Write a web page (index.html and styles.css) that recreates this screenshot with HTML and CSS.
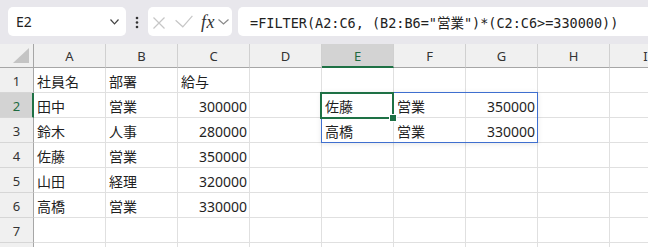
FILE: index.html
```html
<!DOCTYPE html>
<html lang="ja">
<head>
<meta charset="utf-8">
<title>FILTER</title>
<link rel="stylesheet" href="styles.css">
</head>
<body>
<div class="topbar">
  <div class="namebox">
    <span class="nb-text">E2</span>
    <svg class="nb-chev" width="9" height="6" viewBox="0 0 9 6"><polyline points="0.5,0.5 4.5,4.8 8.5,0.5" fill="none" stroke="#444" stroke-width="1.2"/></svg>
  </div>
  <div class="dots">
    <svg width="4" height="14" viewBox="0 0 4 14"><circle cx="2" cy="2" r="1.3" fill="#333"/><circle cx="2" cy="6.5" r="1.3" fill="#333"/><circle cx="2" cy="11" r="1.3" fill="#333"/></svg>
  </div>
  <div class="fbtns">
    <svg class="ic-x" width="12" height="12" viewBox="0 0 12 12"><path d="M0.5 0.5 L11.5 11.5 M11.5 0.5 L0.5 11.5" stroke="#c6c6c6" stroke-width="1.2" fill="none"/></svg>
    <svg class="ic-ok" width="18" height="13" viewBox="0 0 18 13"><polyline points="0.6,5.2 7.8,11.8 17.4,0.8" stroke="#c6c6c6" stroke-width="1.2" fill="none"/></svg>
    <span class="fx">fx</span>
    <svg class="ic-chev" width="11" height="6" viewBox="0 0 11 6"><polyline points="0.5,0.5 5.5,5 10.5,0.5" fill="none" stroke="#8a8a8a" stroke-width="1.2"/></svg>
  </div>
  <div class="formula">=FILTER(A2:C6, (B2:B6="営業")*(C2:C6&gt;=330000))</div>
</div>

<div class="sheet">
  <div class="grid">
    <div class="ch corner"><svg width="17" height="16" viewBox="0 0 17 16"><polygon points="16,0 16,15 0,15" fill="#c4c4c4"/></svg></div>
    <div class="ch">A</div><div class="ch">B</div><div class="ch">C</div><div class="ch">D</div><div class="ch on">E</div><div class="ch">F</div><div class="ch">G</div><div class="ch">H</div><div class="ch">I</div>

    <div class="rh">1</div><div class="c">社員名</div><div class="c">部署</div><div class="c">給与</div><div class="c"></div><div class="c"></div><div class="c"></div><div class="c"></div><div class="c"></div><div class="c"></div>

    <div class="rh on">2</div><div class="c">田中</div><div class="c">営業</div><div class="c num">300000</div><div class="c"></div><div class="c">佐藤</div><div class="c">営業</div><div class="c num">350000</div><div class="c"></div><div class="c"></div>

    <div class="rh">3</div><div class="c">鈴木</div><div class="c">人事</div><div class="c num">280000</div><div class="c"></div><div class="c">高橋</div><div class="c">営業</div><div class="c num">330000</div><div class="c"></div><div class="c"></div>

    <div class="rh">4</div><div class="c">佐藤</div><div class="c">営業</div><div class="c num">350000</div><div class="c"></div><div class="c"></div><div class="c"></div><div class="c"></div><div class="c"></div><div class="c"></div>

    <div class="rh">5</div><div class="c">山田</div><div class="c">経理</div><div class="c num">320000</div><div class="c"></div><div class="c"></div><div class="c"></div><div class="c"></div><div class="c"></div><div class="c"></div>

    <div class="rh">6</div><div class="c">高橋</div><div class="c">営業</div><div class="c num">330000</div><div class="c"></div><div class="c"></div><div class="c"></div><div class="c"></div><div class="c"></div><div class="c"></div>

    <div class="rh">7</div><div class="c"></div><div class="c"></div><div class="c"></div><div class="c"></div><div class="c"></div><div class="c"></div><div class="c"></div><div class="c"></div><div class="c"></div>

    <div class="rh"></div><div class="c"></div><div class="c"></div><div class="c"></div><div class="c"></div><div class="c"></div><div class="c"></div><div class="c"></div><div class="c"></div><div class="c"></div>
  </div>
  <div class="spill"></div>
  <div class="sel"><span class="handle"></span></div>
</div>
</body>
</html>
```

FILE: styles.css
```css
html, body {
  margin: 0;
  padding: 0;
}
body {
  width: 648px;
  height: 247px;
  overflow: hidden;
  background: #ffffff;
  font-family: "Noto Sans", "Noto Sans CJK JP", sans-serif;
  color: #1f1f1f;
}

/* ---------- formula bar ---------- */
.topbar {
  height: 44px;
  box-sizing: border-box;
  padding-top: 7px;
  background: #e8e7ec;
  display: flex;
  align-items: flex-start;
  overflow: hidden;
}
.namebox {
  margin-left: 8px;
  width: 118px;
  height: 29px;
  box-sizing: border-box;
  background: #fff;
  border-radius: 5px;
  display: flex;
  align-items: center;
  justify-content: space-between;
  padding: 0 7px 0 8px;
  font-size: 14px;
  color: #222;
  flex: none;
}
.nb-text {
  line-height: 1;
}
.nb-chev {
  margin-top: 1px;
}
.dots {
  width: 22px;
  height: 29px;
  display: flex;
  align-items: center;
  justify-content: center;
  flex: none;
  padding-top: 2px;
  box-sizing: border-box;
}
.fbtns {
  width: 84px;
  height: 29px;
  background: #fff;
  border-radius: 5px;
  display: flex;
  align-items: center;
  flex: none;
  box-sizing: border-box;
}
.ic-x {
  margin-left: 5px;
  margin-top: 2px;
}
.ic-ok {
  margin-left: 10px;
  margin-top: 0px;
}
.fx {
  margin-left: 8px;
  font-family: "Liberation Serif", "DejaVu Serif", serif;
  font-style: italic;
  font-size: 18px;
  color: #333;
  line-height: 1;
  letter-spacing: 0.5px;
}
.ic-chev {
  margin-left: 3px;
  margin-top: 1px;
}
.formula {
  margin-left: 6px;
  width: 410px;
  height: 29px;
  box-sizing: border-box;
  background: #fff;
  border-radius: 5px 0 0 5px;
  padding-left: 12px;
  display: flex;
  align-items: center;
  flex: none;
  font-family: "DejaVu Sans Mono", "Noto Sans CJK JP", monospace;
  font-size: 13.5px;
  color: #222;
  white-space: nowrap;
}

/* ---------- sheet ---------- */
.sheet {
  position: relative;
  height: 203px;
  overflow: hidden;
}
.grid {
  display: grid;
  grid-template-columns: 34px repeat(9, 72px);
  grid-template-rows: 24px;
  grid-auto-rows: 25px;
}
.grid > div {
  box-sizing: border-box;
}
.ch {
  background: #f0f0f0;
  border-right: 1px solid #d0d0d0;
  border-bottom: 1px solid #a6a6a6;
  display: flex;
  align-items: center;
  justify-content: center;
  font-size: 13px;
  color: #333;
  padding-top: 1px;
}
.ch.corner {
  border-right: 1px solid #a6a6a6;
  align-items: flex-end;
  justify-content: flex-end;
  padding: 0 3px 3px 0;
}
.ch.on {
  background: #d3d3d3;
  border-bottom: 2px solid #1e7145;
  color: #1e6b41;
}
.rh {
  background: #f0f0f0;
  border-right: 1px solid #a6a6a6;
  border-bottom: 1px solid #d6d6d6;
  display: flex;
  align-items: center;
  justify-content: center;
  font-size: 13px;
  color: #333;
  padding-top: 1px;
}
.rh.on {
  background: #d3d3d3;
  border-right: 2px solid #1e7145;
  color: #1e6b41;
  padding-left: 1px;
}
.c {
  border-right: 1px solid #e0e0e0;
  border-bottom: 1px solid #e0e0e0;
  display: flex;
  align-items: center;
  padding: 2px 3px 0 3px;
  font-size: 14px;
  white-space: nowrap;
  overflow: hidden;
}
.c.num {
  justify-content: flex-end;
  padding-right: 2px;
}

/* ---------- overlays ---------- */
.spill {
  position: absolute;
  left: 321px;
  top: 48px;
  width: 217px;
  height: 51px;
  box-sizing: border-box;
  border: 1px solid #3f6fcf;
  box-shadow: 0 1px 5px rgba(0, 0, 0, 0.10);
  pointer-events: none;
}
.sel {
  position: absolute;
  left: 320px;
  top: 48px;
  width: 74px;
  height: 27px;
  box-sizing: border-box;
  border: 2px solid #1e7145;
  pointer-events: none;
}
.handle {
  position: absolute;
  right: -5px;
  bottom: -5px;
  width: 6px;
  height: 6px;
  background: #1e7145;
  border: 1px solid #fff;
}
```
